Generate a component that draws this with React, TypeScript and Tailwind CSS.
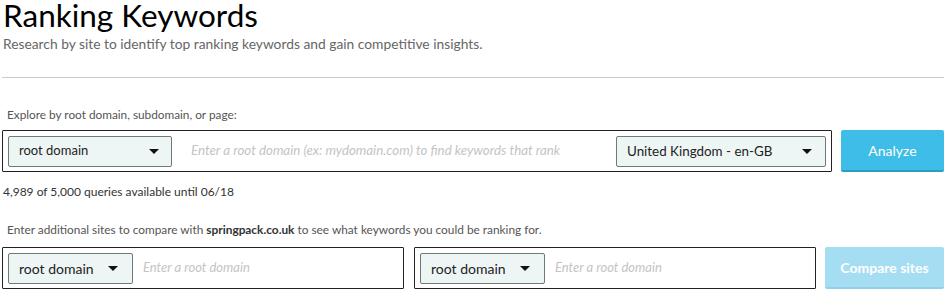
import React from "react";

function Caret() {
  return (
    <svg width="10" height="5" viewBox="0 0 10 5" className="shrink-0">
      <path d="M0 0 L10 0 L5 5 Z" fill="#111" />
    </svg>
  );
}

function Dropdown({ label, className, textClass }: { label: string; className: string; textClass: string }) {
  return (
    <div
      className={`flex h-[31px] shrink-0 items-center justify-between rounded-[2px] border border-[#6c7a7a] bg-[#eef6f5] pl-[10px] ${className}`}
    >
      <span className={`text-[#222] ${textClass}`}>{label}</span>
      <Caret />
    </div>
  );
}

export default function App() {
  return (
    <div className="w-[946px] h-[298px] bg-white px-[2px] font-['Lato',sans-serif] overflow-hidden">
      <h1 className="pl-[1px] text-[31.5px] leading-[30px] text-black">Ranking Keywords</h1>
      <p className="mt-[4px] pl-[1px] text-[13.8px] leading-[20px] text-[#666]">
        Research by site to identify top ranking keywords and gain competitive insights.
      </p>
      <div className="mt-[23px] h-px bg-[#cccccc]" />

      <div className="mt-[29px] pl-[5px] text-[11.8px] leading-[16px] text-[#555]">
        Explore by root domain, subdomain, or page:
      </div>
      <div className="mt-[7px] flex gap-[9px]">
        <div className="flex h-[42px] flex-1 items-center rounded-[1px] border border-[#222] px-[5px]">
          <Dropdown label="root domain" className="w-[164px] pr-[12px]" textClass="text-[13px]" />
          <span className="ml-[19px] flex-1 text-[13.3px] italic text-[#c4c4c4]">
            Enter a root domain (ex: mydomain.com) to find keywords that rank
          </span>
          <Dropdown label="United Kingdom - en-GB" className="w-[210px] pr-[13px]" textClass="text-[13.4px]" />
        </div>
        <button className="h-[42px] w-[103px] rounded-[2px] border-b-[2px] border-[#2a9cc5] bg-[#3dbde8] text-[14px] text-white">
          Analyze
        </button>
      </div>

      <div className="mt-[12px] pl-[1px] text-[12px] leading-[16px] text-[#333]">
        4,989 of 5,000 queries available until 06/18
      </div>

      <div className="mt-[22px] pl-[5px] text-[11.85px] leading-[16px] text-[#555]">
        Enter additional sites to compare with <span className="font-bold text-[#333]">springpack.co.uk</span> to see
        what keywords you could be ranking for.
      </div>
      <div className="mt-[9px] flex gap-[10px]">
        <div className="flex h-[42px] w-[402px] items-center rounded-[1px] border border-[#222] px-[5px]">
          <Dropdown label="root domain" className="w-[125px] pr-[14px]" textClass="text-[14px]" />
          <span className="ml-[10px] text-[13px] italic text-[#c4c4c4]">Enter a root domain</span>
        </div>
        <div className="flex h-[42px] w-[402px] items-center rounded-[1px] border border-[#222] px-[5px]">
          <Dropdown label="root domain" className="w-[125px] pr-[14px]" textClass="text-[14px]" />
          <span className="ml-[10px] text-[13px] italic text-[#c4c4c4]">Enter a root domain</span>
        </div>
        <button className="ml-[-1px] h-[42px] w-[119px] rounded-[2px] border-b-[2px] border-[#93cfe6] bg-[#a5def2] text-[14px] font-bold text-white">
          Compare sites
        </button>
      </div>
    </div>
  );
}
